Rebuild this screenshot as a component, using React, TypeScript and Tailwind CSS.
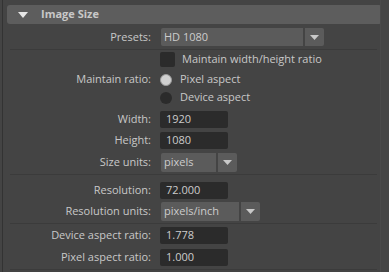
import type { ReactNode } from 'react';

const font = { fontFamily: '"Open Sans", "Noto Sans", sans-serif' };

function Label({ text }: { text: string }) {
  return <div className="w-[149px] shrink-0 text-right text-[11px] text-[#c8c8c8] pr-[1px]">{text}</div>;
}

function Arrow() {
  return (
    <svg width="9" height="5" viewBox="0 0 9 5">
      <path d="M0 0 L9 0 L4.5 5 Z" fill="#c8c8c8" />
    </svg>
  );
}

function Row({ label, mt, h, children }: { label: string; mt: string; h: string; children: ReactNode }) {
  return (
    <div className={`flex items-center gap-[8px] ${mt} ${h}`}>
      <Label text={label} />
      {children}
    </div>
  );
}

function Input({ value }: { value: string }) {
  return (
    <div className="w-[68px] h-full bg-[#2b2b2b] rounded-[2px] flex items-center pl-[6px] text-[11px] text-[#cccccc]">
      {value}
    </div>
  );
}

function Select({ value, w }: { value: string; w: string }) {
  return (
    <div className="flex h-full gap-[2px] ml-[1px]">
      <div className={`${w} h-full bg-[#5b5b5b] rounded-l-[2px] flex items-center pl-[3px] text-[11px] text-[#cccccc]`}>{value}</div>
      <div className="w-[19px] h-full bg-[#5b5b5b] rounded-r-[2px] flex items-center justify-center">
        <Arrow />
      </div>
    </div>
  );
}

function Sep({ mt }: { mt: string }) {
  return <div className={`h-px bg-[#3b3b3b] ml-[7px] mr-[3px] ${mt}`} />;
}

export default function App() {
  return (
    <div className="w-[389px] h-[272px] bg-[#444444] flex overflow-hidden" style={font}>
      <div className="w-[2px] shrink-0" />
      <div className="w-px shrink-0 bg-[#333333]" />
      <div className="w-[377px] shrink-0 flex flex-col">
        <div className="mt-[5px] ml-[4px] mr-[-2px] h-[19px] bg-[#5d5d5d] rounded-[3px] flex items-center">
          <div className="w-[30px] flex justify-center pl-[1px]">
            <svg width="10" height="6" viewBox="0 0 10 6">
              <path d="M0 0 L10 0 L5 6 Z" fill="#e6e6e6" />
            </svg>
          </div>
          <span className="ml-[4px] text-[11px] font-bold text-[#c8c8c8]">Image Size</span>
        </div>

        <Row label="Presets:" mt="mt-[4px]" h="h-[18px]">
          <Select value="HD 1080" w="w-[142px]" />
        </Row>
        <Sep mt="mt-[3px]" />

        <div className="flex items-center gap-[7px] mt-[2px] h-[15px]">
          <div className="w-[149px]" />
          <div className="w-[15px] h-[15px] bg-[#2b2b2b] rounded-[2px] ml-[1px]" />
          <span className="text-[11px] text-[#c8c8c8]">Maintain width/height ratio</span>
        </div>

        <Row label="Maintain ratio:" mt="mt-[6px]" h="h-[13px]">
          <div className="flex items-center gap-[8px]">
            <div className="w-[12px] h-[12px] rounded-full bg-[#d0d0d0] border border-[#9a9a9a]" />
            <span className="text-[11px] text-[#c8c8c8]">Pixel aspect</span>
          </div>
        </Row>
        <div className="flex items-center gap-[8px] mt-[5px] h-[13px]">
          <div className="w-[149px]" />
          <div className="flex items-center gap-[8px]">
            <div className="w-[12px] h-[12px] rounded-full bg-[#2b2b2b]" />
            <span className="text-[11px] text-[#c8c8c8]">Device aspect</span>
          </div>
        </div>

        <Row label="Width:" mt="mt-[7px]" h="h-[17px]">
          <Input value="1920" />
        </Row>
        <Row label="Height:" mt="mt-[4px]" h="h-[17px]">
          <Input value="1080" />
        </Row>
        <Row label="Size units:" mt="mt-[4px]" h="h-[19px]">
          <Select value="pixels" w="w-[55px]" />
        </Row>
        <Sep mt="mt-[2px]" />

        <Row label="Resolution:" mt="mt-[7px]" h="h-[17px]">
          <Input value="72.000" />
        </Row>
        <Row label="Resolution units:" mt="mt-[3px]" h="h-[19px]">
          <Select value="pixels/inch" w="w-[78px]" />
        </Row>
        <Sep mt="mt-[2px]" />

        <Row label="Device aspect ratio:" mt="mt-[3px]" h="h-[17px]">
          <Input value="1.778" />
        </Row>
        <Row label="Pixel aspect ratio:" mt="mt-[5px]" h="h-[17px]">
          <Input value="1.000" />
        </Row>
        <Sep mt="mt-[3px]" />
      </div>
      <div className="w-px shrink-0 bg-[#4a4a4a]" />
      <div className="flex-1 bg-[#454545]" />
    </div>
  );
}
